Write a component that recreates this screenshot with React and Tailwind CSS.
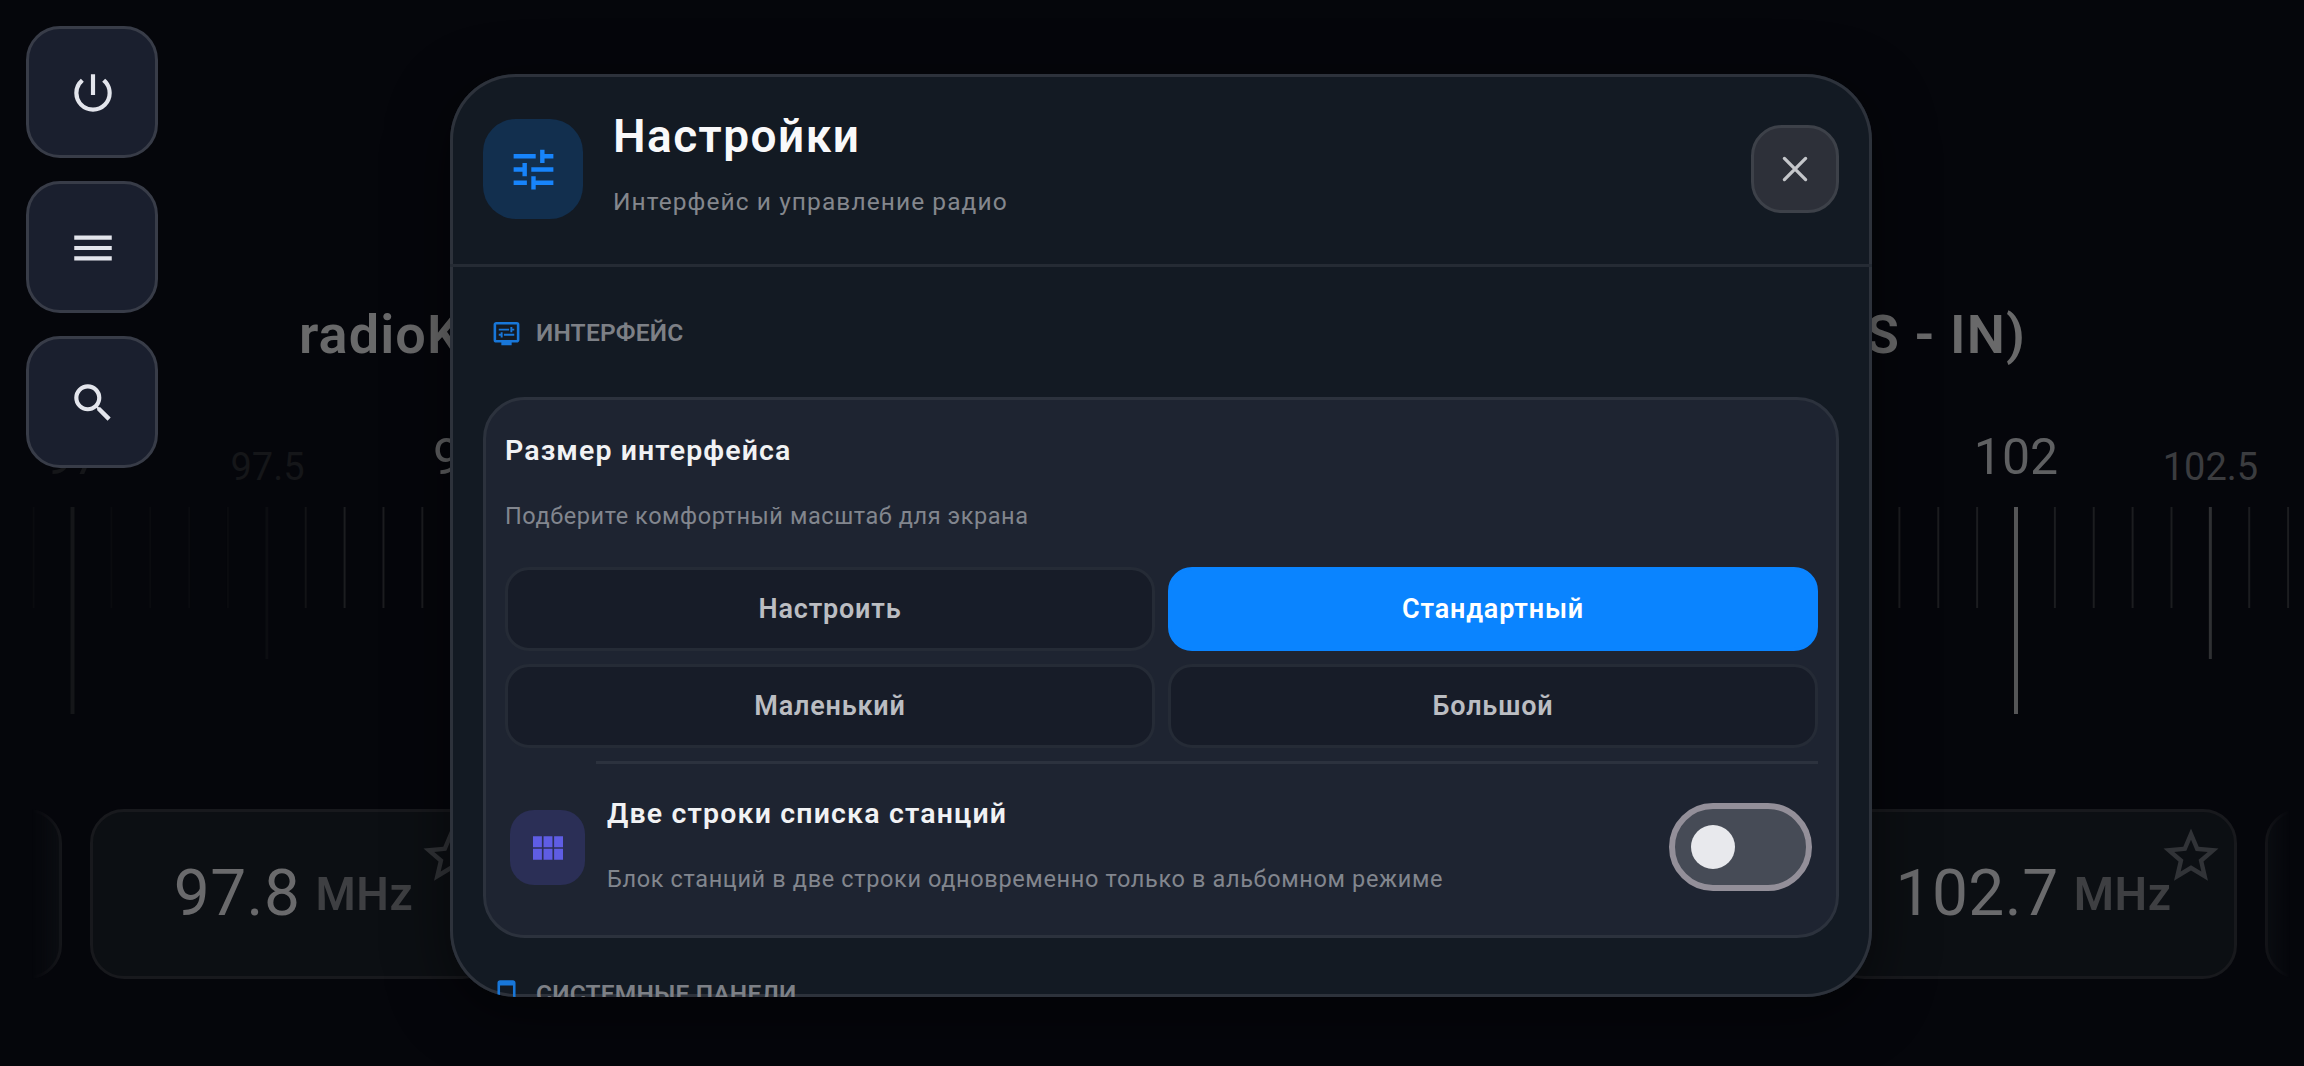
import { useState } from "react";
import clsx from "clsx";
import {
  MdMenu,
  MdOutlineDisplaySettings,
  MdOutlineSmartphone,
  MdPowerSettingsNew,
  MdSearch,
  MdStarBorder,
  MdTune,
  MdViewModule,
} from "react-icons/md";

const sizes = ["Настроить", "Стандартный", "Маленький", "Большой"];

// empty slots are the stations that sit behind the dialog
const stations = ["97.8", null, null, null, "102.7"];

// x of 102 MHz and the distance between two ticks (0.1 MHz)
const ORIGIN = 2016;
const STEP = 38.87;

const ticks = [];
for (let i = -51; i <= 7; i++) {
  const x = ORIGIN + i * STEP;
  const faded = x < 320;
  if (i % 10 === 0) {
    ticks.push({ x, w: 4, h: 207, color: faded ? "#151619" : "#555557" });
  } else if (i % 5 === 0) {
    ticks.push({ x, w: 3, h: 152, color: faded ? "#0c0d11" : "#2f3033" });
  } else {
    let color = "#1c1d20";
    if (faded) color = x > 290 ? "#121316" : "#0a0b0f";
    ticks.push({ x, w: 2, h: 101, color });
  }
}

function SideButton({ children }) {
  return (
    <button className="flex size-[132px] items-center justify-center rounded-[34px] border-3 border-[#383c48] bg-[#1a1f2e] pt-px pl-[2px] text-[50px] text-[#e3e5ec]">
      {children}
    </button>
  );
}

function CloseIcon() {
  return (
    <svg width="28" height="28" viewBox="0 0 28 28" stroke="currentColor" strokeWidth="3.3" strokeLinecap="round">
      <path d="M3.4 3.4 24.6 24.6M24.6 3.4 3.4 24.6" />
    </svg>
  );
}

function Scale() {
  return (
    <svg className="mt-[52px] block" width="2304" height="300" fontFamily="Roboto, sans-serif" textAnchor="middle">
      <text x="73" y="54" fontSize="50" fill="#151619">97</text>
      <text x="267.5" y="60" fontSize="38" fill="#151619">97.5</text>
      <text x="461" y="54" fontSize="50" fill="#5f6062">98</text>
      <text x="2016" y="54" fontSize="50" fill="#5f6062">102</text>
      <text x="2210.5" y="60" fontSize="38" fill="#3b3c3f">102.5</text>
      {ticks.map((t) => (
        <rect key={t.x} x={t.x - t.w / 2} y="87" width={t.w} height={t.h} fill={t.color} />
      ))}
    </svg>
  );
}

function Station({ freq }) {
  return (
    <div className="relative flex h-[170px] w-[407px] shrink-0 items-center justify-center gap-[15px] rounded-[34px] border-3 border-[#18191d] bg-[#0c0f13]">
      {freq && (
        <>
          <span className="text-[64px] leading-none tracking-[0.5px] text-[#6a6a6c]">{freq}</span>
          <span className="text-[46px] leading-none font-semibold tracking-[0.6px] text-[#3e3f42]">MHz</span>
          <MdStarBorder className="absolute top-[11px] right-[10px] text-[66px] text-[#313337]" />
        </>
      )}
    </div>
  );
}

function SectionLabel({ icon, children }) {
  return (
    <div className="flex h-[31px] items-center gap-[14px] pl-2 text-[#7d8086]">
      <span className="text-[31px] text-[#1877d9]">{icon}</span>
      <span className="pb-[2px] text-[24.5px] leading-[30px] font-semibold tracking-[0.2px] whitespace-nowrap">{children}</span>
    </div>
  );
}

export default function App() {
  const [size, setSize] = useState("Стандартный");
  const [twoRows, setTwoRows] = useState(false);

  return (
    <div className="relative h-[1066px] w-[2304px] overflow-hidden bg-[#05060b] font-[Roboto,sans-serif]">
      {/* radio screen */}
      <div className="flex justify-between pt-[302px] pr-[278px] pl-[299px] text-[54px] leading-[66px] font-semibold tracking-[1.1px] text-[#69696a]">
        <span>radioK</span>
        <span>S - IN)</span>
      </div>
      <Scale />
      <div className="mr-[14px] ml-[32px] mt-[89px] flex gap-7 overflow-hidden mask-[linear-gradient(to_right,transparent,black_34px,black_2226px,transparent)]">
        <div className="-ml-[377px]"><Station /></div>
        {stations.map((s, i) => <Station key={i} freq={s} />)}
        <Station />
      </div>

      {/* side menu */}
      <div className="absolute top-[26px] left-[26px] flex flex-col gap-[23px]">
        <SideButton><MdPowerSettingsNew /></SideButton>
        <SideButton><MdMenu /></SideButton>
        <SideButton><MdSearch /></SideButton>
      </div>

      {/* settings dialog */}
      <div className="absolute top-[74px] left-[450px] h-[923px] w-[1422px] overflow-hidden rounded-[66px] bg-[#131a23] shadow-[inset_0_0_0_3px_#2d323b,0_16px_60px_rgba(0,0,0,0.5)]">
        <div className="flex h-[193px] items-center border-b-3 border-[#252b34] px-[33px]">
          <div className="flex size-[100px] items-center justify-center rounded-[33px] bg-[#122f4e] text-[53px] text-[#1784fb]">
            <MdTune />
          </div>
          <div className="ml-[30px] grow pb-3">
            <h1 className="text-[46px] leading-[56px] font-semibold tracking-[1.45px] text-[#f9f9fa]">Настройки</h1>
            <p className="mt-[22px] text-[24.5px] leading-8 tracking-[1.08px] text-[#84878d]">Интерфейс и управление радио</p>
          </div>
          <button className="flex size-[88px] items-center justify-center rounded-[31px] border-3 border-[#3d4149] bg-[#2d3039] text-[#c4c6ca]">
            <CloseIcon />
          </button>
        </div>

        <div className="px-[33px] pt-[51px]">
          <SectionLabel icon={<MdOutlineDisplaySettings />}>ИНТЕРФЕЙС</SectionLabel>

          <div className="mt-12 h-[541px] rounded-[42px] border-3 border-[#2c323d] bg-[#1e2431] pt-8 pr-[18px] pl-[19px]">
            <h2 className="text-[28.5px] leading-[38px] font-semibold tracking-[1.1px] text-[#f1f2f4]">Размер интерфейса</h2>
            <p className="mt-[30px] text-[23.5px] leading-8 tracking-[0.57px] text-[#82868e]">Подберите комфортный масштаб для экрана</p>
            <div className="mt-[35px] grid grid-cols-2 gap-[13px]">
              {sizes.map((s) => (
                <button
                  key={s}
                  onClick={() => setSize(s)}
                  className={clsx(
                    "h-[84px] rounded-[24px] border-3 text-[27px] font-semibold tracking-[0.8px]",
                    s === size
                      ? "border-[#0a84ff] bg-[#0a84ff] text-white"
                      : "border-[#252b36] bg-[#171c28] text-[#bbbdc2]"
                  )}
                >
                  {s}
                </button>
              ))}
            </div>
            <div className="mt-[13px] ml-[91px] h-[3px] bg-[#2c323e]" />

            <div className="flex h-[167px] items-center pr-[6px] pl-[5px]">
              <div className="flex size-[75px] items-center justify-center rounded-[24px] bg-[#2b2f56] text-[40px] text-[#5f5de4]">
                <MdViewModule />
              </div>
              <div className="ml-[22px] grow pb-[4px]">
                <h2 className="text-[28.5px] leading-[38px] font-semibold tracking-[1.17px] text-[#f1f2f4]">Две строки списка станций</h2>
                <p className="mt-[30px] mb-px text-[23.5px] leading-8 tracking-[0.64px] text-[#82868e]">
                  Блок станций в две строки одновременно только в альбомном режиме
                </p>
              </div>
              <button
                onClick={() => setTwoRows(!twoRows)}
                className={clsx(
                  "mb-px flex h-[88px] w-[143px] items-center rounded-full border-6 border-[#938f99] bg-[#464b56] px-4",
                  twoRows && "justify-end"
                )}
              >
                <span className="size-11 rounded-full bg-[#e8e9ed]" />
              </button>
            </div>
          </div>

          <div className="mt-[41px]">
            <SectionLabel icon={<MdOutlineSmartphone />}>СИСТЕМНЫЕ ПАНЕЛИ</SectionLabel>
          </div>
        </div>
      </div>
    </div>
  );
}
